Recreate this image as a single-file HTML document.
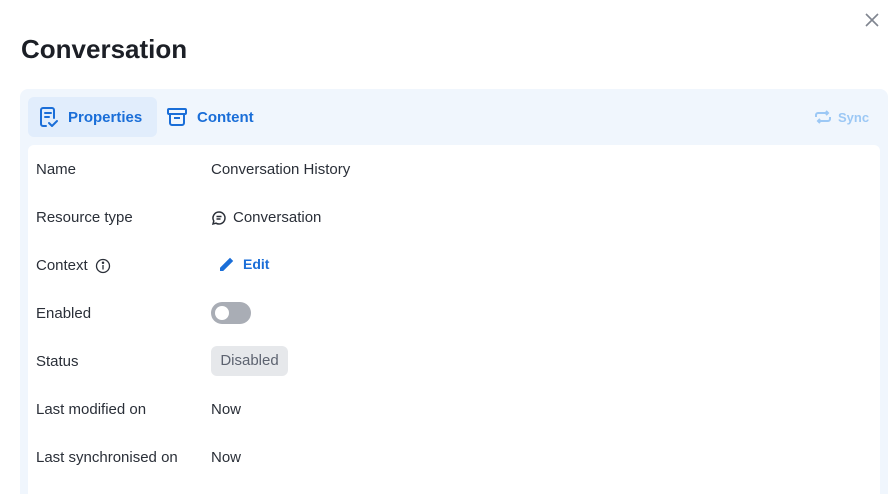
<!DOCTYPE html>
<html style="overflow:hidden;height:494px"><head><style>
body{margin:0;width:888px;height:494px;overflow:hidden;background:#fff;font-family:"Liberation Sans",sans-serif;color:#1f2430;position:relative}
h1{position:absolute;left:21px;top:34px;margin:0;font-size:26px;font-weight:bold;color:#1c1f26}
.close{position:absolute;left:864px;top:12px}
.panel{position:absolute;left:20px;top:89px;width:868px;height:405px;background:#f0f6fd;border-radius:8px 8px 0 0;overflow:hidden}
.tab{position:absolute;top:8px;height:40px;display:flex;align-items:center;font-weight:bold;font-size:15px;color:#1a6ed8;border-radius:6px}
.card{position:absolute;left:8px;top:56px;width:852px;height:349px;background:#fff;border-radius:6px 6px 0 0}
.row{position:absolute;left:8px;font-size:15px;color:#2a2f38;height:20px;line-height:20px}
.val{position:absolute;left:183px;font-size:15px;color:#2a2f38;height:20px;line-height:20px;display:flex;align-items:center}
</style></head><body>
<h1>Conversation</h1>
<svg class="close" width="16" height="16" viewBox="0 0 16 16"><path d="M2 2L14 14M14 2L2 14" stroke="#808590" stroke-width="1.6"/></svg>
<div class="panel">
<div class="tab" style="left:8px;width:129px;background:#e1edfc">
<svg style="margin-left:11px" width="20" height="22" viewBox="0 0 20 22" fill="none" stroke="#1a6ed8" stroke-width="2" stroke-linecap="round" stroke-linejoin="round"><path d="M7 20H4a2 2 0 0 1-2-2V4a2 2 0 0 1 2-2h9a2 2 0 0 1 2 2v8"/><path d="M6 7h6M6 11h4"/><path d="M10 17l3 3 5-5"/></svg>
<span style="margin-left:9px">Properties</span></div>
<div class="tab" style="left:146px">
<svg width="22" height="20" viewBox="0 0 22 20" fill="none" stroke="#1a6ed8" stroke-width="2" stroke-linejoin="round"><rect x="2" y="2" width="18" height="5" rx="1"/><path d="M4 7v9a2 2 0 0 0 2 2h10a2 2 0 0 0 2-2V7M8 11h6"/></svg>
<span style="margin-left:9px">Content</span></div>
<div class="tab" style="left:794px;color:#9cc8f5;font-size:13px">
<svg width="18" height="14" viewBox="0 0 18 14" fill="none" stroke="#9cc8f5" stroke-width="2"><path d="M2 7V5a2 2 0 0 1 2-2h10M12 1l2 2-2 2M16 7v2a2 2 0 0 1-2 2H4M6 13l-2-2 2-2"/></svg>
<span style="margin-left:6px">Sync</span></div>
<div class="card">
<div class="row" style="top:15px">Name</div><div class="val" style="top:15px">Conversation History</div>
<div class="row" style="top:63px">Resource type</div><div class="val" style="top:63px"><svg width="16" height="16" viewBox="0 0 16 16" fill="none" stroke="#2a2f38" stroke-width="1.5"><path d="M8 2a6 6 0 1 1-3 11.2L2 14l.8-3A6 6 0 0 1 8 2z"/><path d="M5.5 6.5h5M5.5 9h4"/></svg><span style="margin-left:6px">Conversation</span></div>
<div class="row" style="top:111px;display:flex;align-items:center">Context<svg style="margin-left:7px" width="16" height="16" viewBox="0 0 16 16" fill="none" stroke="#2a2f38" stroke-width="1.3"><circle cx="8" cy="8" r="6.5"/><path d="M8 7v4.5"/><circle cx="8" cy="4.8" r=".6" fill="#2a2f38"/></svg></div>
<div class="val" style="top:109px;left:191px;color:#1a6ed8;font-weight:bold;font-size:14px"><svg width="16" height="16" viewBox="0 0 16 16"><path d="M1 15v-3.2L11 1.8l3.2 3.2L4.2 15z" fill="#1a6ed8"/></svg><span style="margin-left:8px">Edit</span></div>
<div class="row" style="top:159px">Enabled</div>
<div style="position:absolute;left:183px;top:157px;width:40px;height:22px;border-radius:11px;background:#a9adb5"><div style="position:absolute;left:4px;top:4px;width:14px;height:14px;border-radius:50%;background:#fff"></div></div>
<div class="row" style="top:207px">Status</div>
<div style="position:absolute;left:183px;top:201px;width:77px;height:30px;border-radius:6px;background:#e6e8eb;color:#5d6370;font-size:15px;line-height:30px;text-align:center">Disabled</div>
<div class="row" style="top:255px">Last modified on</div><div class="val" style="top:255px">Now</div>
<div class="row" style="top:303px">Last synchronised on</div><div class="val" style="top:303px">Now</div>
</div></div>
</body></html>
